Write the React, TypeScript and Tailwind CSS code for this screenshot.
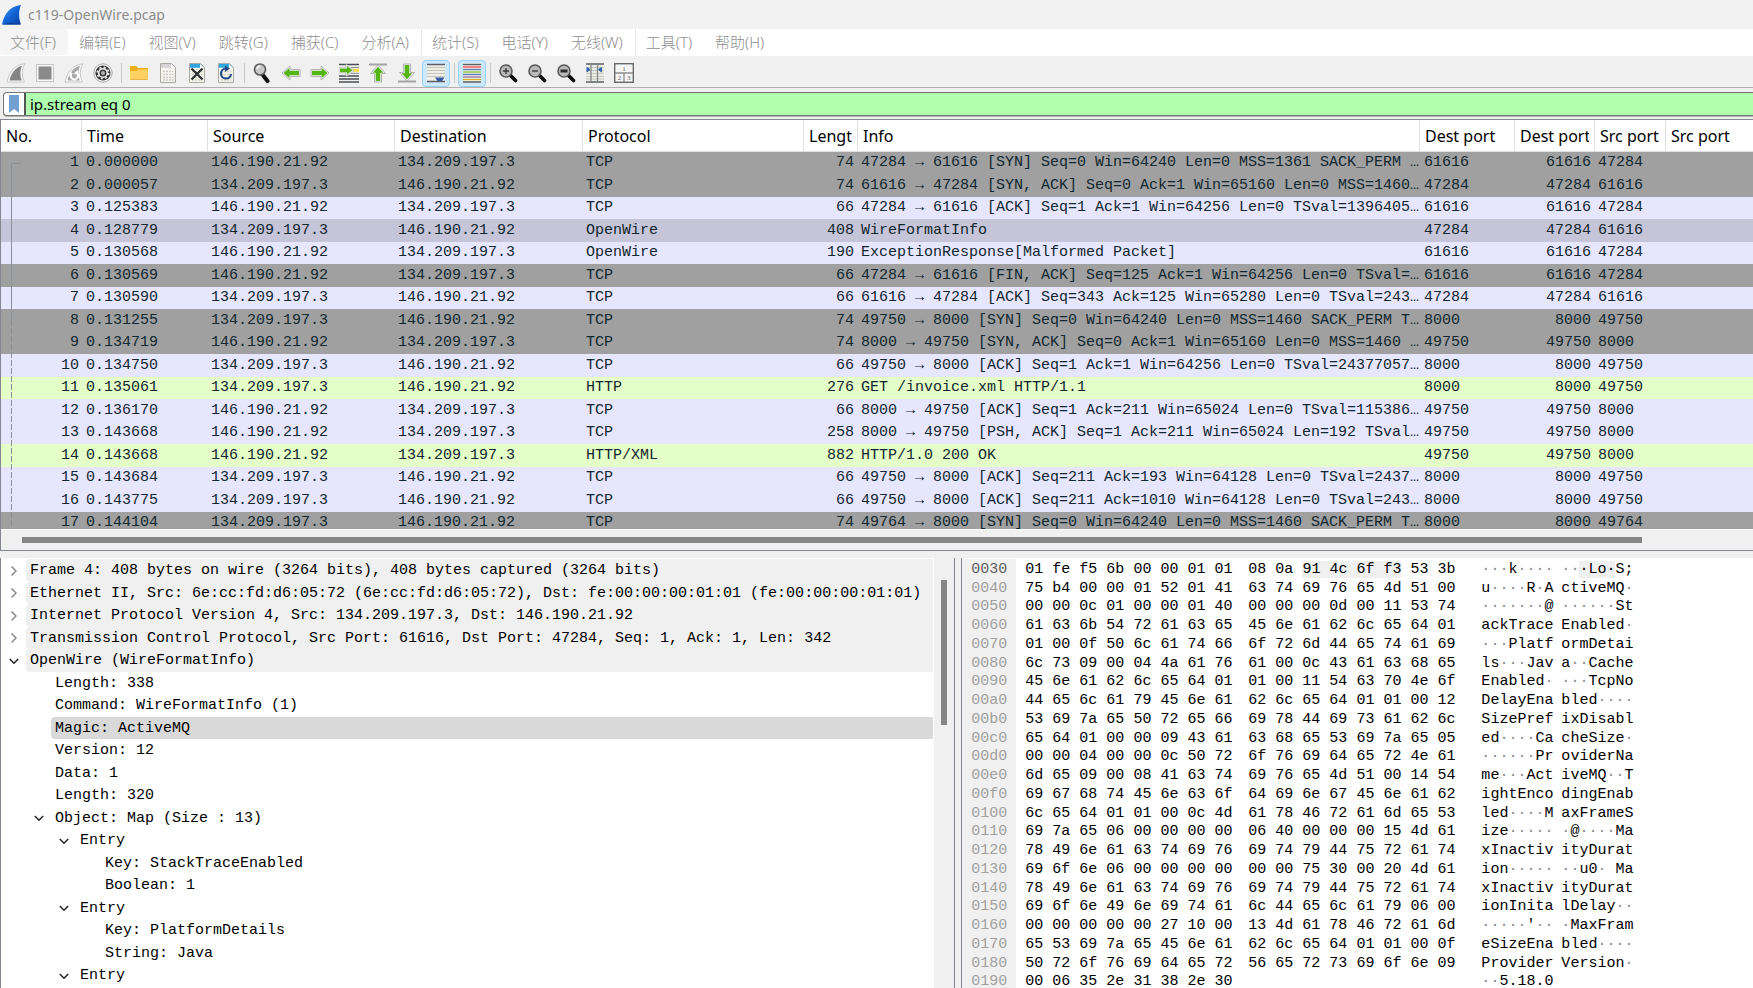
import React from "react";

type PacketTone = "dark" | "tcp" | "http" | "selected";

interface Packet {
  source: string;
  destination: string;
  time: string;
  protocol: string;
  length: number;
  info: string;
  destPort: string;
  srcPort: string;
  tone: PacketTone;
}

const A = "146.190.21.92";
const B = "134.209.197.3";

const packet = (
  tone: PacketTone,
  time: string,
  source: string,
  protocol: string,
  length: number,
  info: string,
  destPort: string,
  srcPort: string
): Packet => ({
  tone,
  time,
  source,
  destination: source === A ? B : A,
  protocol,
  length,
  info,
  destPort,
  srcPort,
});

const packets: Packet[] = [
  packet("dark", "0.000000", A, "TCP", 74, "47284 → 61616 [SYN] Seq=0 Win=64240 Len=0 MSS=1361 SACK_PERM …", "61616", "47284"),
  packet("dark", "0.000057", B, "TCP", 74, "61616 → 47284 [SYN, ACK] Seq=0 Ack=1 Win=65160 Len=0 MSS=1460…", "47284", "61616"),
  packet("tcp", "0.125383", A, "TCP", 66, "47284 → 61616 [ACK] Seq=1 Ack=1 Win=64256 Len=0 TSval=1396405…", "61616", "47284"),
  packet("selected", "0.128779", B, "OpenWire", 408, "WireFormatInfo", "47284", "61616"),
  packet("tcp", "0.130568", A, "OpenWire", 190, "ExceptionResponse[Malformed Packet]", "61616", "47284"),
  packet("dark", "0.130569", A, "TCP", 66, "47284 → 61616 [FIN, ACK] Seq=125 Ack=1 Win=64256 Len=0 TSval=…", "61616", "47284"),
  packet("tcp", "0.130590", B, "TCP", 66, "61616 → 47284 [ACK] Seq=343 Ack=125 Win=65280 Len=0 TSval=243…", "47284", "61616"),
  packet("dark", "0.131255", B, "TCP", 74, "49750 → 8000 [SYN] Seq=0 Win=64240 Len=0 MSS=1460 SACK_PERM T…", "8000", "49750"),
  packet("dark", "0.134719", A, "TCP", 74, "8000 → 49750 [SYN, ACK] Seq=0 Ack=1 Win=65160 Len=0 MSS=1460 …", "49750", "8000"),
  packet("tcp", "0.134750", B, "TCP", 66, "49750 → 8000 [ACK] Seq=1 Ack=1 Win=64256 Len=0 TSval=24377057…", "8000", "49750"),
  packet("http", "0.135061", B, "HTTP", 276, "GET /invoice.xml HTTP/1.1", "8000", "49750"),
  packet("tcp", "0.136170", A, "TCP", 66, "8000 → 49750 [ACK] Seq=1 Ack=211 Win=65024 Len=0 TSval=115386…", "49750", "8000"),
  packet("tcp", "0.143668", A, "TCP", 258, "8000 → 49750 [PSH, ACK] Seq=1 Ack=211 Win=65024 Len=192 TSval…", "49750", "8000"),
  packet("http", "0.143668", A, "HTTP/XML", 882, "HTTP/1.0 200 OK", "49750", "8000"),
  packet("tcp", "0.143684", B, "TCP", 66, "49750 → 8000 [ACK] Seq=211 Ack=193 Win=64128 Len=0 TSval=2437…", "8000", "49750"),
  packet("tcp", "0.143775", B, "TCP", 66, "49750 → 8000 [ACK] Seq=211 Ack=1010 Win=64128 Len=0 TSval=243…", "8000", "49750"),
  packet("dark", "0.144104", B, "TCP", 74, "49764 → 8000 [SYN] Seq=0 Win=64240 Len=0 MSS=1460 SACK_PERM T…", "8000", "49764"),
];

const tones: Record<PacketTone, string> = {
  dark: "bg-[#a0a0a0]",
  tcp: "bg-[#e7e6ff]",
  http: "bg-[#e4ffc7]",
  selected: "bg-[#c6c4d9]",
};

const columns = [
  { label: "No.", width: "w-[81px]" },
  { label: "Time", width: "w-[126px]" },
  { label: "Source", width: "w-[187px]" },
  { label: "Destination", width: "w-[188px]" },
  { label: "Protocol", width: "w-[221px]" },
  { label: "Lengt", width: "w-[54px]" },
  { label: "Info", width: "w-[562px]" },
  { label: "Dest port", width: "w-[95px]" },
  { label: "Dest port", width: "w-[80px]" },
  { label: "Src port", width: "w-[71px]" },
  { label: "Src port", width: "" },
];

interface TreeItem {
  level: 0 | 1 | 2 | 3;
  label: string;
  state?: "open" | "closed";
  selected?: boolean;
}

const treeItems: TreeItem[] = [
  { level: 0, state: "closed", label: "Frame 4: 408 bytes on wire (3264 bits), 408 bytes captured (3264 bits)" },
  { level: 0, state: "closed", label: "Ethernet II, Src: 6e:cc:fd:d6:05:72 (6e:cc:fd:d6:05:72), Dst: fe:00:00:00:01:01 (fe:00:00:00:01:01)" },
  { level: 0, state: "closed", label: "Internet Protocol Version 4, Src: 134.209.197.3, Dst: 146.190.21.92" },
  { level: 0, state: "closed", label: "Transmission Control Protocol, Src Port: 61616, Dst Port: 47284, Seq: 1, Ack: 1, Len: 342" },
  { level: 0, state: "open", label: "OpenWire (WireFormatInfo)" },
  { level: 1, label: "Length: 338" },
  { level: 1, label: "Command: WireFormatInfo (1)" },
  { level: 1, label: "Magic: ActiveMQ", selected: true },
  { level: 1, label: "Version: 12" },
  { level: 1, label: "Data: 1" },
  { level: 1, label: "Length: 320" },
  { level: 1, state: "open", label: "Object: Map (Size : 13)" },
  { level: 2, state: "open", label: "Entry" },
  { level: 3, label: "Key: StackTraceEnabled" },
  { level: 3, label: "Boolean: 1" },
  { level: 2, state: "open", label: "Entry" },
  { level: 3, label: "Key: PlatformDetails" },
  { level: 3, label: "String: Java" },
  { level: 2, state: "open", label: "Entry" },
];

const indents = ["pl-0", "pl-[25px]", "pl-[50px]", "pl-[75px]"];

const hexStart = 0x30;
const hexLines = [
  "01 fe f5 6b 00 00 01 01 08 0a 91 4c 6f f3 53 3b",
  "75 b4 00 00 01 52 01 41 63 74 69 76 65 4d 51 00",
  "00 00 0c 01 00 00 01 40 00 00 00 0d 00 11 53 74",
  "61 63 6b 54 72 61 63 65 45 6e 61 62 6c 65 64 01",
  "01 00 0f 50 6c 61 74 66 6f 72 6d 44 65 74 61 69",
  "6c 73 09 00 04 4a 61 76 61 00 0c 43 61 63 68 65",
  "45 6e 61 62 6c 65 64 01 01 00 11 54 63 70 4e 6f",
  "44 65 6c 61 79 45 6e 61 62 6c 65 64 01 01 00 12",
  "53 69 7a 65 50 72 65 66 69 78 44 69 73 61 62 6c",
  "65 64 01 00 00 09 43 61 63 68 65 53 69 7a 65 05",
  "00 00 04 00 00 0c 50 72 6f 76 69 64 65 72 4e 61",
  "6d 65 09 00 08 41 63 74 69 76 65 4d 51 00 14 54",
  "69 67 68 74 45 6e 63 6f 64 69 6e 67 45 6e 61 62",
  "6c 65 64 01 01 00 0c 4d 61 78 46 72 61 6d 65 53",
  "69 7a 65 06 00 00 00 00 06 40 00 00 00 15 4d 61",
  "78 49 6e 61 63 74 69 76 69 74 79 44 75 72 61 74",
  "69 6f 6e 06 00 00 00 00 00 00 75 30 00 20 4d 61",
  "78 49 6e 61 63 74 69 76 69 74 79 44 75 72 61 74",
  "69 6f 6e 49 6e 69 74 61 6c 44 65 6c 61 79 06 00",
  "00 00 00 00 00 27 10 00 13 4d 61 78 46 72 61 6d",
  "65 53 69 7a 65 45 6e 61 62 6c 65 64 01 01 00 0f",
  "50 72 6f 76 69 64 65 72 56 65 72 73 69 6f 6e 09",
  "00 06 35 2e 31 38 2e 30",
].map((line) => line.split(" "));

// Byte range of the TCP timestamp option
const markStart = 0x3a;
const markEnd = 0x3d;

const isMarked = (address: number) =>
  address >= markStart && address <= markEnd;

const toAscii = (byte: string) => {
  const code = parseInt(byte, 16);
  return code >= 0x20 && code < 0x7f ? String.fromCharCode(code) : "·";
};

/* ---------- toolbar icons ---------- */

const Icon: React.FC<{ children: React.ReactNode }> = ({ children }) => (
  <svg width="20" height="20" viewBox="0 0 20 20" fill="none" aria-hidden="true">
    {children}
  </svg>
);

const FinIcon = () => (
  <Icon>
    <path d="M1 19C3 9 9 1.500 19 .8C15.500 6 15.500 13 18.500 19Z" fill="#fafafa" stroke="#c6c6c6" />
    <path d="M3.500 17.500C5 10.500 9.500 4.500 16 2.800C13.800 8 13.800 13 15.800 17.500Z" fill="#858585" />
  </Icon>
);

const StopIcon = () => (
  <Icon>
    <rect x="1.500" y="1.500" width="17" height="17" fill="#f7f7f7" stroke="#c4c4c4" />
    <rect x="3.500" y="3.500" width="13" height="13" fill="#8a8a8a" />
  </Icon>
);

const RestartIcon = () => (
  <Icon>
    <path d="M1 19C3 9 9 1.500 19 .8C15.500 6 15.500 13 18.500 19Z" fill="#fafafa" stroke="#c6c6c6" />
    <path d="M3.500 17.500C5 10.500 9.500 4.500 16 2.800C13.800 8 13.800 13 15.800 17.500Z" fill="#a8a8a8" />
    <path d="M8 10A3.600 3.600 0 1 0 13.500 11" stroke="#fff" strokeWidth="2" />
    <path d="M9.500 11L14.500 11.500L13.500 7Z" fill="#fff" />
  </Icon>
);

const OptionsIcon = () => (
  <Icon>
    <circle cx="10" cy="10" r="9.200" fill="#fafafa" stroke="#a8a8a8" />
    <circle cx="10" cy="10" r="7.600" fill="#343434" />
    <circle cx="10" cy="10" r="4.300" stroke="#f4f4f4" strokeWidth="1.600" />
    <circle cx="10" cy="10" r="5.700" stroke="#f4f4f4" strokeWidth="1.600" strokeDasharray="2 2.480" />
    <circle cx="10" cy="10" r="2" fill="#b4b4b4" />
  </Icon>
);

const FolderIcon = () => (
  <Icon>
    <path d="M1 4Q1 3 2 3H7L9 5H18Q19 5 19 6V8H1Z" fill="#f0ad1c" />
    <path d="M1 8H7.500L9.500 6.500H18Q19 6.500 19 7.500V16Q19 17 18 17H2Q1 17 1 16Z" fill="#ffd163" />
    <path d="M1.500 16.500H18.500" stroke="#eeb544" />
  </Icon>
);

const Page: React.FC<{ accent: string; digits: string }> = ({ accent, digits }) => (
  <>
    <path d="M2.500 .5H13.500L17.500 4.500V19.500H2.500Z" fill="#f6f6ee" stroke="#a9a9a2" />
    <path d="M3 1H13.300L17 4.800H3Z" fill={accent} />
    <path d="M13 1V5H17Z" fill="#fff" />
    <path d="M5 8.500H15.500M5 11.500H15.500M5 14.500H15.500M5 17H15.500" stroke={digits} strokeWidth="1.500" strokeDasharray="2 1" />
  </>
);

const SaveIcon = () => (
  <Icon>
    <Page accent="#d4d4d4" digits="#c9c9c9" />
  </Icon>
);

const CloseFileIcon = () => (
  <Icon>
    <Page accent="#2fa6e0" digits="#d2d2cc" />
    <path d="M4.500 5.500L15.500 16.500M15.500 5.500L4.500 16.500" stroke="#2b2f33" strokeWidth="2.200" />
  </Icon>
);

const ReloadIcon = () => (
  <Icon>
    <Page accent="#2fa6e0" digits="#d2d2cc" />
    <path d="M10 5.500A5 5 0 1 0 15 11" stroke="#1f4a86" strokeWidth="2.200" />
    <path d="M9 2.500L14 5.500L9 9Z" fill="#1f4a86" />
  </Icon>
);

const FindIcon = () => (
  <Icon>
    <path d="M10 11L15.500 18" stroke="#111" strokeWidth="4" strokeLinecap="round" />
    <circle cx="8" cy="6.500" r="5.500" fill="#c9c9c9" stroke="#5c5c5c" strokeWidth="1.600" />
    <path d="M5 6A3.200 3.200 0 0 1 8 3.300" stroke="#fff" strokeWidth="1.500" />
  </Icon>
);

const LeftIcon = () => (
  <Icon>
    <path d="M1 10L9 3V6.500H19V13.500H9V17Z" fill="#f4f4f4" stroke="#b4b4b4" />
    <path d="M2.500 10L8.300 5V7.800H18V12.200H8.300V15Z" fill="#55b512" />
  </Icon>
);

const RightIcon = () => (
  <Icon>
    <path d="M19 10L11 3V6.500H1V13.500H11V17Z" fill="#f4f4f4" stroke="#b4b4b4" />
    <path d="M17.500 10L11.700 5V7.800H2V12.200H11.700V15Z" fill="#55b512" />
  </Icon>
);

const GotoIcon = () => (
  <Icon>
    <path d="M0 1.500H20M0 13H20M0 16H20M0 19H20" stroke="#4b4f52" strokeWidth="1.300" />
    <path d="M12 4.500H20M12 10.300H20" stroke="#8a8d90" />
    <path d="M13 7.300H20" stroke="#f5de45" strokeWidth="3" />
    <path d="M0 4.500H7V1L15 7.500L7 13.500V10H0Z" fill="#f2f2f2" stroke="#b4b4b4" strokeWidth=".6" />
    <path d="M1 5.500H8V3L13.500 7.300L8 11.500V9.200H1Z" fill="#55b512" />
  </Icon>
);

const FirstIcon = () => (
  <Icon>
    <path d="M1 1.500H19" stroke="#a5a5a5" strokeWidth="2" />
    <path d="M10 2L17.500 10.500H13.500V19H6.500V10.500H2.500Z" fill="#f4f4f4" stroke="#b4b4b4" />
    <path d="M10 3.800L15.300 9.700H12.300V18H7.700V9.700H4.700Z" fill="#55b512" />
  </Icon>
);

const LastIcon = () => (
  <Icon>
    <path d="M1 18.500H19" stroke="#a5a5a5" strokeWidth="2" />
    <path d="M10 18L17.500 9.500H13.500V1H6.500V9.500H2.500Z" fill="#f4f4f4" stroke="#b4b4b4" />
    <path d="M10 16.200L15.300 10.300H12.300V2H7.700V10.300H4.700Z" fill="#55b512" />
  </Icon>
);

const AutoScrollIcon = () => (
  <Icon>
    <rect x="1" y="1" width="18" height="18" fill="#eeeee6" />
    <path d="M1 4.500H19M1 7.500H19M1 10.500H19M1 13.500H19" stroke="#c5c5bd" />
    <path d="M1 1.500H19M1 18.500H19" stroke="#5b5f63" strokeWidth="1.300" />
    <path d="M9 14.500H18.500L16 18H11.500Z" fill="#2c5aa6" />
  </Icon>
);

const ColorizeIcon = () => (
  <Icon>
    <rect x="1" y="0" width="18" height="20" fill="#f3f3ea" />
    <path d="M1 1.500H19M1 19H19" stroke="#5b5f63" strokeWidth="1.400" />
    <path d="M1 4H19" stroke="#f0524f" strokeWidth="1.400" />
    <path d="M1 6.500H19" stroke="#5d7fbd" strokeWidth="1.400" />
    <path d="M1 9H19" stroke="#86cc3c" strokeWidth="1.400" />
    <path d="M1 11.500H19" stroke="#5d7fbd" strokeWidth="1.400" />
    <path d="M1 14H19" stroke="#9a7aa6" strokeWidth="1.400" />
    <path d="M1 16.500H19" stroke="#d8b02c" strokeWidth="1.400" />
  </Icon>
);

const Zoom: React.FC<{ children: React.ReactNode }> = ({ children }) => (
  <Icon>
    <path d="M12 12L17.500 17.500" stroke="#0c0c0c" strokeWidth="3.600" strokeLinecap="round" />
    <circle cx="8" cy="8" r="6" fill="#b9b9b9" stroke="#5a5a5a" strokeWidth="1.600" />
    {children}
  </Icon>
);

const ZoomInIcon = () => (
  <Zoom>
    <path d="M5 8H11M8 5V11" stroke="#333" strokeWidth="1.300" />
  </Zoom>
);

const ZoomOutIcon = () => (
  <Zoom>
    <path d="M5 8H11" stroke="#333" strokeWidth="1.300" />
  </Zoom>
);

const ZoomResetIcon = () => (
  <Zoom>
    <rect x="4.500" y="6.500" width="7" height="3" fill="#2e2e2e" />
  </Zoom>
);

const ResizeIcon = () => (
  <Icon>
    <rect x="1" y="1" width="18" height="18" fill="#ecece6" />
    <path d="M1 4.500H19M1 7.500H19M1 10.500H19M1 13.500H19M1 16H19" stroke="#c8c8c2" />
    <path d="M1 1H19M1 19H19" stroke="#5b5f63" strokeWidth="1.400" />
    <path d="M6 1V19M12.500 1V19" stroke="#85888a" strokeWidth="1.300" />
    <path d="M2 4.500L5 6.500L2 9ZM16.500 4.500L13.500 6.500L16.500 9Z" fill="#2f64ad" stroke="#2f64ad" />
  </Icon>
);

const LayoutIcon = () => (
  <Icon>
    <rect x=".7" y=".7" width="18.600" height="18.600" fill="#f5f5f5" stroke="#66696c" strokeWidth="1.400" />
    <path d="M1 10H19M10 10V19" stroke="#8a8d90" strokeWidth="1.300" />
    <g fill="#66696c" fontFamily="Liberation Serif, serif" fontSize="7" textAnchor="middle">
      <text x="10" y="8">1</text>
      <text x="5.500" y="17">2</text>
      <text x="14.800" y="17">3</text>
    </g>
  </Icon>
);

interface Tool {
  label: string;
  icon: React.FC;
  active?: boolean;
}

const toolGroups: Tool[][] = [
  [
    { label: "Start capture", icon: FinIcon },
    { label: "Stop capture", icon: StopIcon },
    { label: "Restart capture", icon: RestartIcon },
    { label: "Capture options", icon: OptionsIcon },
  ],
  [
    { label: "Open", icon: FolderIcon },
    { label: "Save", icon: SaveIcon },
    { label: "Close file", icon: CloseFileIcon },
    { label: "Reload file", icon: ReloadIcon },
  ],
  [
    { label: "Find packet", icon: FindIcon },
    { label: "Previous packet", icon: LeftIcon },
    { label: "Next packet", icon: RightIcon },
    { label: "Go to packet", icon: GotoIcon },
    { label: "First packet", icon: FirstIcon },
    { label: "Last packet", icon: LastIcon },
    { label: "Auto scroll", icon: AutoScrollIcon, active: true },
  ],
  [{ label: "Colorize", icon: ColorizeIcon, active: true }],
  [
    { label: "Zoom in", icon: ZoomInIcon },
    { label: "Zoom out", icon: ZoomOutIcon },
    { label: "Normal size", icon: ZoomResetIcon },
    { label: "Resize columns", icon: ResizeIcon },
    { label: "Layout", icon: LayoutIcon },
  ],
];

const menuGroups = [
  ["文件(F)", "编辑(E)", "视图(V)", "跳转(G)", "捕获(C)", "分析(A)"],
  ["统计(S)", "电话(Y)", "无线(W)"],
  ["工具(T)", "帮助(H)"],
];

/* ---------- window parts ---------- */

const TitleBar = () => (
  <header className="flex h-[29px] shrink-0 items-center bg-[#f2f2f2] pl-0.5">
    <svg width="20" height="20" viewBox="0 0 20 20" aria-hidden="true">
      <defs>
        <linearGradient id="fin" x1="0" y1="0" x2="1" y2="1">
          <stop offset="0" stopColor="#4aa0f5" />
          <stop offset=".5" stopColor="#1266d6" />
          <stop offset="1" stopColor="#0a3fa0" />
        </linearGradient>
      </defs>
      <path d="M0 19.500C2 9 8 1 19 0C16.500 6 16.500 13 19 19.500Z" fill="url(#fin)" />
      <path d="M0 19.500Q9 16.500 19 19.500Z" fill="#0b3a8e" />
    </svg>
    <h1 className="ml-1.5 text-sm leading-5 text-[#8c8c8c]">c119-OpenWire.pcap</h1>
  </header>
);

const MenuBar = () => (
  <nav className="flex h-[27px] shrink-0 bg-white pb-px">
    {menuGroups.map((group, groupIndex) => (
      <div
        key={group[0]}
        className={`flex gap-px ${groupIndex > 0 ? "border-l border-[#e6e6e6]" : ""}`}
      >
        {group.map((item) => (
          <button
            key={item}
            type="button"
            className={`rounded pr-3 pl-2.5 text-[15px] leading-[26px] font-light text-[#8f8f8f] ${
              item === "文件(F)" ? "bg-[#f5f5f5]" : ""
            }`}
          >
            {item}
          </button>
        ))}
      </div>
    ))}
  </nav>
);

const ToolBar = () => (
  <div className="flex h-8 shrink-0 items-center gap-px border-b border-[#b0b0b0] bg-[#f0f0f0] pt-1 pb-px pl-0.5">
    {toolGroups.map((group, groupIndex) => (
      <React.Fragment key={group[0].label}>
        {groupIndex > 0 && (
          <span className="flex w-1.5 justify-center">
            <span className="h-5 w-px bg-[#c8c8c8]" />
          </span>
        )}
        {group.map(({ label, icon: ToolIcon, active }) => (
          <button
            key={label}
            type="button"
            aria-label={label}
            className={`flex h-[27px] w-7 items-center justify-center rounded-sm border ${
              active ? "border-[#99d1ff] bg-[#cce8ff]" : "border-transparent"
            }`}
          >
            <ToolIcon />
          </button>
        ))}
      </React.Fragment>
    ))}
  </div>
);

const FilterBar = () => (
  <div className="shrink-0 bg-[#f0f0f0] pt-1 pb-[3px] pl-[3px]">
    <div className="flex h-6 rounded-l-sm border border-r-0 border-[#767676] bg-white shadow-[0_1px_0_#b5b5b5]">
      <button
        type="button"
        aria-label="Filter bookmarks"
        className="flex w-[22px] items-center justify-center border-r-2 border-[#555]"
      >
        <svg width="10" height="18" viewBox="0 0 10 18" aria-hidden="true">
          <path d="M0 0H10V18L5 14L0 18Z" fill="#729fcf" />
        </svg>
      </button>
      <input
        type="text"
        aria-label="Display filter"
        defaultValue="ip.stream eq 0"
        className="min-w-0 flex-1 bg-[#afffaf] pl-1 text-[15px] leading-5 text-black outline-none"
      />
    </div>
  </div>
);

const PacketList = () => (
  <section className="flex min-h-0 flex-1 flex-col border-y border-l border-[#828790] bg-white">
    <div className="relative min-h-0 flex-1 overflow-hidden">
      <table className="w-full table-fixed border-separate border-spacing-0">
        <thead>
          <tr className="h-8">
            {columns.map((column, index) => (
              <th
                key={index}
                className={`border-r border-b border-[#e0e0e0] px-[5px] py-0 text-left text-base leading-6 font-normal text-black last:border-r-0 ${column.width}`}
              >
                <div className="overflow-hidden whitespace-nowrap">{column.label}</div>
              </th>
            ))}
          </tr>
        </thead>
        <tbody className="font-['Liberation_Mono',monospace] text-[15px] leading-[22px] whitespace-nowrap text-[#12272e]">
          {packets.map((item, index) => (
            <tr key={index} className={`h-[22px] align-bottom even:h-[23px] ${tones[item.tone]}`}>
              <td className="p-0 pr-[3px] text-right">{index + 1}</td>
              <td className="p-0 pl-1">{item.time}</td>
              <td className="p-0 pl-[3px]">{item.source}</td>
              <td className="p-0 pl-[3px]">{item.destination}</td>
              <td className="p-0 pl-[3px]">{item.protocol}</td>
              <td className="p-0 pr-1 text-right">{item.length}</td>
              <td className="p-0 pl-[3px]">{item.info}</td>
              <td className="p-0 pl-1">{item.destPort}</td>
              <td className="p-0 pr-1 text-right">{item.destPort}</td>
              <td className="p-0 pl-[3px]">{item.srcPort}</td>
              <td className="p-0" />
            </tr>
          ))}
        </tbody>
      </table>
      {/* conversation marker drawn over the first column */}
      <svg
        className="pointer-events-none absolute top-8 left-0"
        width="24"
        height="378"
        viewBox="0 0 24 378"
        fill="none"
        aria-hidden="true"
      >
        <path d="M20 11.500H10.500V168" stroke="#8a9297" />
        <path d="M10.500 168V378" stroke="#8a9297" strokeDasharray="6 2" />
      </svg>
    </div>
    <div className="flex h-[21px] shrink-0 items-center border-t border-white bg-[#f0f0f0] pr-[111px] pl-[21px]">
      <div className="h-1.5 flex-1 bg-[#868686]" />
    </div>
  </section>
);

const Chevron: React.FC<{ state: "open" | "closed" }> = ({ state }) => (
  <svg width="10" height="12" viewBox="0 0 10 12" fill="none" aria-hidden="true">
    {state === "open" ? (
      <path d="M.8 4L5 8.200L9.200 4" stroke="#222" strokeWidth="1.500" />
    ) : (
      <path d="M2.500 1.500L7 6L2.500 10.500" stroke="#8c8c8c" strokeWidth="1.500" />
    )}
  </svg>
);

const PacketDetails = () => (
  <section className="flex min-w-0 grow-[955] basis-0 overflow-hidden border-x border-[#828790] bg-white">
    <ul className="min-w-0 flex-1 pt-px font-['Liberation_Mono',monospace] text-[15px] leading-5 text-black">
      {treeItems.map((item, index) => (
        <li
          key={index}
          className={`flex h-[22px] odd:h-[23px] ${indents[item.level]}`}
        >
          {item.state ? (
            <button
              type="button"
              aria-label={`Toggle ${item.label}`}
              className="flex w-[25px] items-center justify-center"
            >
              <Chevron state={item.state} />
            </button>
          ) : (
            <span className="w-[25px]" />
          )}
          <span
            className={`flex min-w-0 flex-1 items-center rounded-l-sm pt-px pl-1 whitespace-nowrap ${
              item.selected ? "bg-[#d9d9d9]" : item.level === 0 ? "bg-[#f0f0f0]" : ""
            }`}
          >
            {item.label}
          </span>
        </li>
      ))}
    </ul>
    <div className="ml-px w-5 shrink-0 bg-[#f0f0f0] pt-[22px] pl-[7px]">
      <div className="h-[145px] w-1.5 bg-[#868686]" />
    </div>
  </section>
);

const HexGroup: React.FC<{ bytes: string[]; address: number }> = ({ bytes, address }) => {
  const before = bytes.filter((_, i) => address + i < markStart);
  const marked = bytes.filter((_, i) => isMarked(address + i));
  const after = bytes.filter((_, i) => address + i > markEnd);

  if (!marked.length) return <>{bytes.join(" ")}</>;

  return (
    <>
      {before.join(" ")} <span className="bg-[#f0f0f0]">{marked.join(" ")}</span>{" "}
      {after.join(" ")}
    </>
  );
};

const AsciiGroup: React.FC<{ bytes: string[]; address: number }> = ({ bytes, address }) => (
  <>
    {bytes.map((byte, i) => {
      const char = toAscii(byte);
      if (isMarked(address + i)) {
        return (
          <span key={i} className="bg-[#f0f0f0]">
            {char}
          </span>
        );
      }
      return char === "·" ? (
        <span key={i} className="text-[#8c8c8c]">
          {char}
        </span>
      ) : (
        char
      );
    })}
  </>
);

const PacketBytes = () => (
  <section className="min-w-0 grow-[792] basis-0 overflow-hidden border-l border-[#828790] bg-white pt-px">
    <table className="w-full table-fixed border-separate border-spacing-0 font-['Liberation_Mono',monospace] text-[15px] leading-[15px] whitespace-pre text-black">
      <colgroup>
        <col className="w-[54px]" />
        <col className="w-[232px]" />
        <col className="w-[233px]" />
        <col className="w-[80px]" />
        <col />
      </colgroup>
      <tbody>
        {hexLines.map((bytes, index) => {
          const address = hexStart + index * 16;
          return (
            <tr key={address} className="h-[19px] align-top [&:nth-child(4n+2)]:h-[18px]">
              <td
                className={`bg-[#f0f0f0] p-0 pt-[3px] pl-[9px] ${
                  index === 0 ? "text-[#5f5f5f]" : "text-[#a0a0a0]"
                }`}
              >
                {address.toString(16).padStart(4, "0")}
              </td>
              <td className="p-0 pt-[3px] pl-[9px]">
                <HexGroup bytes={bytes.slice(0, 8)} address={address} />
              </td>
              <td className="p-0 pt-[3px]">
                <HexGroup bytes={bytes.slice(8)} address={address + 8} />
              </td>
              <td className="p-0 pt-[3px]">
                <AsciiGroup bytes={bytes.slice(0, 8)} address={address} />
              </td>
              <td className="p-0 pt-[3px]">
                <AsciiGroup bytes={bytes.slice(8)} address={address + 8} />
              </td>
            </tr>
          );
        })}
      </tbody>
    </table>
  </section>
);

const App: React.FC = () => (
  <div className="flex h-screen flex-col overflow-hidden bg-[#f0f0f0] font-['Noto_Sans','Noto_Sans_CJK_SC',sans-serif]">
    <TitleBar />
    <MenuBar />
    <ToolBar />
    <FilterBar />
    <main className="flex min-h-0 flex-1 flex-col gap-[7px]">
      <PacketList />
      <div className="flex min-h-0 flex-1 gap-1.5">
        <PacketDetails />
        <PacketBytes />
      </div>
    </main>
  </div>
);

export default App;
